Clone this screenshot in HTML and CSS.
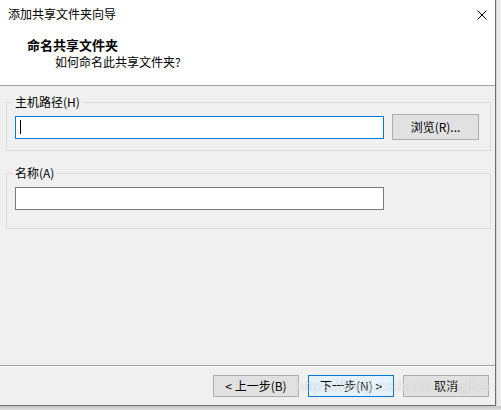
FILE: index.html
```html
<!DOCTYPE html>
<html lang="zh-CN">
<head>
  <meta charset="UTF-8">
  <title>添加共享文件夹向导</title>
  <link rel="stylesheet" href="styles.css">
</head>
<body>
  <div class="screen">
    <div class="window">
      <div class="titlebar">
        <span class="title">添加共享文件夹向导</span>
        <svg class="close" width="10" height="10" viewBox="0 0 10 10">
          <path d="M0.5 0.5 L9.5 9.5 M9.5 0.5 L0.5 9.5" stroke="#000" stroke-width="1" fill="none"/>
        </svg>
      </div>

      <div class="header">
        <div class="heading">命名共享文件夹</div>
        <div class="subheading">如何命名此共享文件夹?</div>
      </div>

      <div class="content">
        <fieldset class="group">
          <legend>主机路径(H)</legend>
          <div class="row">
            <div class="field focused"><span class="caret"></span></div>
            <button class="btn browse" type="button">浏览(R)...</button>
          </div>
        </fieldset>

        <fieldset class="group second">
          <legend>名称(A)</legend>
          <div class="row">
            <div class="field"></div>
          </div>
        </fieldset>
      </div>

      <div class="footer">
        <button class="btn" type="button">&lt; 上一步(B)</button>
        <button class="btn primary" type="button">下一步(N) &gt;</button>
        <button class="btn" type="button">取消</button>
      </div>

      <span class="watermark">https://blog.csdn.net/xingla5</span>
    </div>
    <div class="side"></div>
  </div>
  <div class="shadow"></div>
</body>
</html>
```

FILE: styles.css
```css
body {
  margin: 0;
  width: 501px;
  height: 410px;
  overflow: hidden;
  background: #e4e4e4;
  font-family: "Noto Sans CJK SC", "Microsoft YaHei", sans-serif;
  font-size: 12px;
  color: #000;
}

.screen {
  display: flex;
}

.window {
  position: relative;
  width: 496px;
  height: 406px;
  box-sizing: border-box;
  border-right: 1px solid #6f6f6f;
  border-bottom: 1px solid #6f6f6f;
  background: #f0f0f0;
  display: flex;
  flex-direction: column;
}

.side {
  flex: 1;
  height: 406px;
  background: #ececec;
  border-left: 1px solid #d4d4d4;
}

.shadow {
  height: 4px;
  background: linear-gradient(#c4c4c4, #e2e2e2);
}

.titlebar {
  height: 30px;
  background: #fff;
  display: flex;
  align-items: center;
  justify-content: space-between;
  padding: 0 8px 2px 8px;
  box-sizing: border-box;
}

.title {
  line-height: 16px;
}

.close {
  display: block;
  margin-top: 1px;
}

.header {
  height: 56px;
  box-sizing: border-box;
  background: #fff;
  border-bottom: 1px solid #a0a0a0;
  padding-top: 7px;
}

.heading {
  padding-left: 27px;
  font-size: 13px;
  font-weight: bold;
  line-height: 16px;
}

.subheading {
  padding-left: 55px;
  line-height: 16px;
  margin-top: 1px;
}

.content {
  flex: 1;
  padding: 8px 4px 0 6px;
}

.group {
  margin: 0;
  padding: 4px 8px 10px 8px;
  border: 1px solid #dcdcdc;
  min-inline-size: 0;
}

.group legend {
  padding: 0 2px;
  margin-left: -2px;
  line-height: 16px;
}

.group.second {
  margin-top: 14px;
  padding-top: 6px;
  padding-bottom: 18px;
}

.row {
  display: flex;
  align-items: center;
  gap: 8px;
}

.field {
  width: 369px;
  height: 23px;
  box-sizing: border-box;
  background: #fff;
  border: 1px solid #7a7a7a;
  display: flex;
  align-items: center;
}

.field.focused {
  border-color: #0078d7;
}

.caret {
  width: 1px;
  height: 14px;
  margin-left: 4px;
  background: #000;
}

.btn {
  width: 86px;
  height: 22px;
  box-sizing: border-box;
  padding: 0;
  background: #e1e1e1;
  border: 1px solid #adadad;
  font-family: inherit;
  font-size: 12px;
  color: #000;
  line-height: 18px;
}

.btn.browse {
  width: 87px;
  height: 26px;
}

.btn.primary {
  background: #e5f1fb;
  border-color: #0078d7;
}

.footer {
  height: 40px;
  box-sizing: border-box;
  border-top: 1px solid #a0a0a0;
  box-shadow: inset 0 1px #fff;
  padding: 9px 6px 0 0;
  display: flex;
  justify-content: flex-end;
  gap: 9px;
}

.watermark {
  position: absolute;
  left: 296px;
  top: 377px;
  font-family: "Liberation Sans", Arial, sans-serif;
  font-size: 15px;
  letter-spacing: 0.3px;
  color: rgba(255, 255, 255, 0.6);
  text-shadow: 0 0 1px rgba(0, 0, 0, 0.2);
  pointer-events: none;
}
```
